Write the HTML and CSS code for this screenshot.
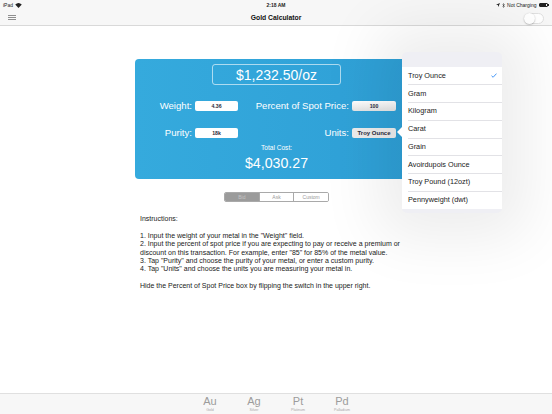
FILE: index.html
```html
<!DOCTYPE html>
<html>
<head>
<meta charset="utf-8">
<link rel="stylesheet" href="styles.css">
</head>
<body>
<div class="topbar">
  <div class="status">
    <div class="st-left">iPad
      <svg class="wifi" width="7" height="5" viewBox="0 0 14 10"><path d="M7 10 L0.5 3.2 A9.5 9.5 0 0 1 13.5 3.2 Z" fill="#222"/></svg>
    </div>
    <div class="st-mid">2:18 AM</div>
    <div class="st-right">
      <svg width="4" height="4" viewBox="0 0 8 8"><path d="M8 0 L0 3.5 L3.8 4.2 L4.5 8 Z" fill="#222"/></svg>
      <svg width="3" height="5" viewBox="0 0 6 10"><path d="M1 2.5 L5 7 L3 9 L3 1 L5 3 L1 7.5" fill="none" stroke="#222" stroke-width="0.9"/></svg>
      <span>Not Charging</span>
      <span class="battery"><span class="bfill"></span></span><span class="bnub"></span>
    </div>
  </div>
  <div class="nav">
    <div class="burger"><span></span><span></span><span></span></div>
    <div class="title">Gold Calculator</div>
    <div class="toggle"><span class="knob"></span></div>
  </div>
</div>

<div class="main">
  <div class="card">
    <div class="price">$1,232.50/oz</div>
    <div class="row row1">
      <div class="lbl">Weight:</div>
      <div class="field">4.36</div>
      <div class="lbl">Percent of Spot Price:</div>
      <div class="field field-grad">100</div>
    </div>
    <div class="row row2">
      <div class="lbl">Purity:</div>
      <div class="field">18k</div>
      <div class="lbl">Units:</div>
      <div class="field field-btn">Troy Ounce</div>
    </div>
    <div class="total-lbl">Total Cost:</div>
    <div class="total">$4,030.27</div>
  </div>

  <div class="seg">
    <div class="seg-item sel">Bid</div>
    <div class="seg-item">Ask</div>
    <div class="seg-item">Custom</div>
  </div>

  <div class="instr">
    <p>Instructions:</p>
    <p class="gap">1. Input the weight of your metal in the "Weight" field.<br>
    2. Input the percent of spot price if you are expecting to pay or receive a premium or discount on this transaction. For example, enter "85" for 85% of the metal value.<br>
    3. Tap "Purity" and choose the purity of your metal, or enter a custom purity.<br>
    4. Tap "Units" and choose the units you are measuring your metal in.</p>
    <p class="gap">Hide the Percent of Spot Price box by flipping the switch in the upper right.</p>
  </div>

  <div class="popover">
    <span class="arrow"></span>
    <div class="pop-head"></div>
    <ul class="pop-list">
      <li>Troy Ounce<svg class="check" width="6" height="5" viewBox="0 0 12 10"><path d="M1 5.5 L4.3 8.5 L11 1.2" fill="none" stroke="#1a7df4" stroke-width="1.6"/></svg></li>
      <li>Gram</li>
      <li>Kilogram</li>
      <li>Carat</li>
      <li>Grain</li>
      <li>Avoirdupois Ounce</li>
      <li>Troy Pound (12ozt)</li>
      <li>Pennyweight (dwt)</li>
    </ul>
  </div>
</div>

<div class="tabbar">
  <div class="tab"><span class="sym">Au</span><span class="name">Gold</span></div>
  <div class="tab"><span class="sym">Ag</span><span class="name">Silver</span></div>
  <div class="tab"><span class="sym">Pt</span><span class="name">Platinum</span></div>
  <div class="tab"><span class="sym">Pd</span><span class="name">Palladium</span></div>
</div>
</body>
</html>
```

FILE: styles.css
```css
* { box-sizing: border-box; }
html, body { margin: 0; padding: 0; }
body {
  width: 552px;
  height: 414px;
  overflow: hidden;
  display: flex;
  flex-direction: column;
  background: #fff;
  font-family: "Liberation Sans", Arial, sans-serif;
  color: #222;
}
.topbar {
  background: #f7f7f7;
  border-bottom: 1px solid #d9d9d9;
}
.status {
  height: 10px;
  display: grid;
  grid-template-columns: 1fr auto 1fr;
  align-items: center;
  padding: 0 3px;
  font-size: 5px;
  color: #222;
}
.st-left { display: flex; align-items: center; gap: 2px; }
.st-mid { font-weight: bold; font-size: 5px; }
.st-right { display: flex; align-items: center; justify-content: flex-end; gap: 2px; }
.battery {
  width: 9px; height: 4.5px; border: 0.6px solid #222; border-radius: 1px; padding: 0.6px; display: inline-flex;
}
.bfill { flex: 1; background: #222; }
.bnub { width: 1px; height: 2px; background: #222; margin-left: -1.5px; }
.nav {
  height: 15px;
  position: relative;
  display: flex;
  align-items: center;
  justify-content: space-between;
  padding: 0 8px;
}
.burger { display: flex; flex-direction: column; gap: 1px; width: 8px; }
.burger span { height: 1px; background: #8e8e8e; }
.title {
  position: absolute; left: 0; right: 0; text-align: center;
  font-weight: bold; font-size: 6.8px; color: #111;
}
.toggle {
  width: 20px; height: 11px; border-radius: 6px; border: 0.8px solid #e0e0e0; background: #fff;
  position: relative; margin-top: 1px;
}
.knob {
  position: absolute; left: -0.8px; top: -0.8px; width: 11px; height: 11px; border-radius: 50%;
  background: #fff; box-shadow: 0 0.5px 1.5px rgba(0,0,0,0.35);
}
.main {
  flex: 1;
  position: relative;
  padding-left: 135px;
}
.card {
  margin-top: 33px;
  width: 283px;
  height: 120px;
  border-radius: 4px;
  background: linear-gradient(90deg, #35aadd, #2e9fd6);
  color: #fff;
  padding-top: 5px;
}
.price {
  width: 129px; height: 21px; margin: 0 auto;
  border: 0.8px solid rgba(255,255,255,0.6);
  border-radius: 3px;
  text-align: center; font-size: 14px; line-height: 20px;
}
.row {
  display: grid;
  grid-template-columns: 57px 43px 1fr 44px;
  column-gap: 3px;
  align-items: center;
  height: 10px;
  padding-right: 22px;
}
.row1 { margin-top: 16px; }
.row2 { margin-top: 17px; }
.lbl { text-align: right; font-size: 9.6px; line-height: 10px; white-space: nowrap; }
.field {
  height: 10px; background: #fff; border-radius: 2px; color: #2a2a3a;
  font-size: 5.2px; font-weight: bold; text-align: center; line-height: 10px; white-space: nowrap;
}
.field-grad { background: linear-gradient(180deg, #fff, #e4e4e4); }
.field-btn { background: #ececec; font-size: 6px; }
.total-lbl { text-align: center; font-size: 6.6px; line-height: 8px; margin-top: 6px; }
.total { text-align: center; font-size: 14.2px; line-height: 16px; margin-top: 3px; }
.seg {
  display: flex;
  width: 105px;
  height: 10px;
  margin: 13px 0 0 89px;
  border: 0.7px solid #a9a9a9;
  border-radius: 2px;
  overflow: hidden;
}
.seg-item {
  flex: 1; font-size: 5px; line-height: 9px; text-align: center; color: #9a9a9a; background: #fff;
  border-left: 0.7px solid #a9a9a9;
}
.seg-item:first-child { border-left: none; }
.seg-item.sel { background: #9b9b9b; color: #c4c4c4; }
.instr {
  margin-top: 13px;
  padding-left: 5px;
  width: 270px;
  font-size: 7px;
  line-height: 8.4px;
  color: #222;
}
.instr p { margin: 0; }
.instr p.gap { margin-top: 8.4px; }
.popover {
  position: absolute;
  left: 402px;
  top: 26px;
  width: 100px;
  height: 161px;
  background: #efeff4;
  border-radius: 5px;
  box-shadow: 0 0 60px 25px rgba(0,0,0,0.075);
}
.arrow {
  position: absolute;
  left: -5px; top: 75px;
  width: 0; height: 0;
  border-top: 5px solid transparent;
  border-bottom: 5px solid transparent;
  border-right: 5px solid #fff;
}
.pop-head { height: 14.5px; }
.pop-list { list-style: none; margin: 0; padding: 0; background: #fff; }
.pop-list li {
  height: 17.75px;
  display: flex; align-items: center; justify-content: space-between;
  padding: 0 5px 0 6px;
  font-size: 7.3px; color: #222;
  position: relative;
}
.pop-list li + li::before {
  content: ""; position: absolute; left: 6px; right: 0; top: 0; height: 0.6px; background: #e2e2e6;
}
.tabbar {
  height: 21px;
  background: #f7f7f7;
  border-top: 1px solid #e0e0e0;
  display: flex;
  justify-content: center;
}
.tab {
  width: 44px;
  display: flex; flex-direction: column; align-items: center;
  color: #9c9c9c;
}
.sym { font-size: 11px; line-height: 12px; margin-top: 1px; }
.name { font-size: 3.6px; line-height: 5px; margin-top: 1px; color: #a8a8a8; }
```
